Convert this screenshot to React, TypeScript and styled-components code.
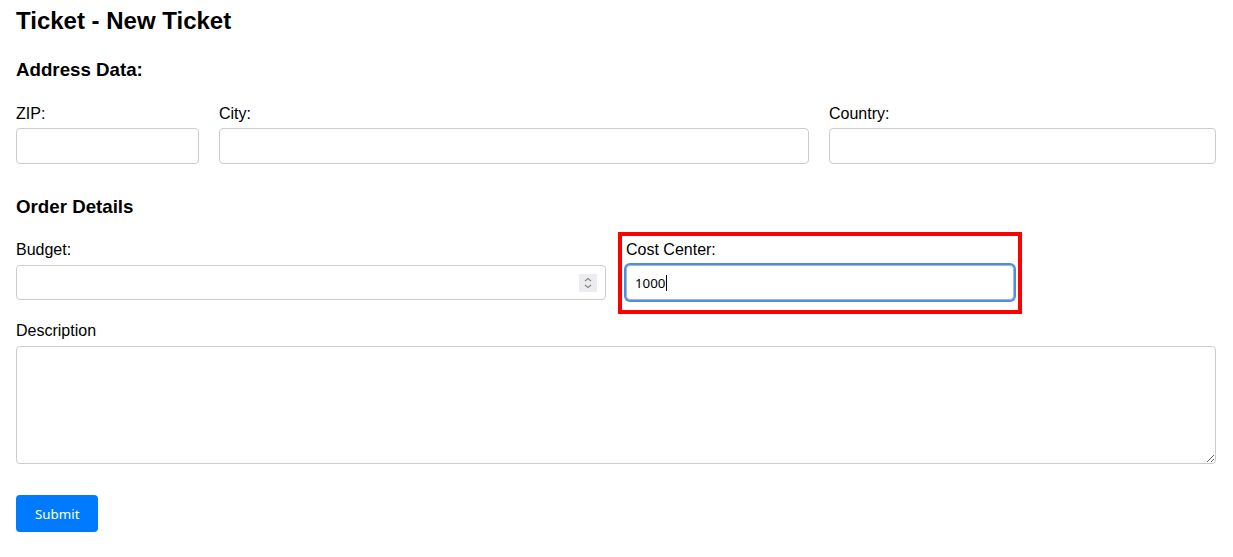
import React, { useEffect, useRef } from "react";
import styled, { createGlobalStyle } from "styled-components";

const Global = createGlobalStyle`
  html, body { margin: 0; padding: 0; background: #fff; }
  body { font-family: "Liberation Sans", Arial, sans-serif; color: #000; }
  * { box-sizing: border-box; }
`;

const Page = styled.div`
  padding: 0 16px 20px 16px;
  width: 1232px;
`;

const Title = styled.h1`
  margin: 7px 0 0 0;
  font-size: 24px;
  line-height: 28px;
  font-weight: 700;
`;

const SectionTitle = styled.h3<{ $top: number; $bottom: number }>`
  margin: ${(p) => p.$top}px 0 ${(p) => p.$bottom}px 0;
  font-size: 18.72px;
  line-height: 21px;
  font-weight: 700;
`;

const Row = styled.div<{ $cols: string }>`
  display: grid;
  grid-template-columns: ${(p) => p.$cols};
  column-gap: 20px;
  align-items: start;
`;

const Group = styled.div<{ $highlight?: boolean; $mb?: number }>`
  position: relative;
  display: flex;
  flex-direction: column;
  margin-bottom: ${(p) => p.$mb ?? 0}px;
  ${(p) =>
    p.$highlight
      ? `
    &::before {
      content: "";
      position: absolute;
      top: -9px;
      left: -8px;
      right: -8px;
      bottom: -14px;
      border: 4px solid #ff0000;
      pointer-events: none;
    }
  `
      : ""}
`;

const Label = styled.label<{ $mb?: number }>`
  display: block;
  font-size: 16px;
  line-height: 18px;
  margin-bottom: ${(p) => p.$mb ?? 5}px;
`;

const TextInput = styled.input<{ $h?: number }>`
  width: 100%;
  height: ${(p) => p.$h ?? 36}px;
  border: 1px solid #ccc;
  border-radius: 4px;
  padding: 0 8px;
  font-family: "Noto Sans", sans-serif;
  font-size: 13.33px;
  color: #000;
  background: #fff;
  &:focus {
    outline: none;
    border-color: #a9b8c8;
    box-shadow: 0 0 0 2px #4a8ee6;
  }
`;

const FieldWrap = styled.div`
  position: relative;
`;

const Caret = styled.span`
  position: absolute;
  left: 40px;
  top: 10px;
  width: 1px;
  height: 16px;
  background: #000;
  pointer-events: none;
`;

const NumberBox = styled.div`
  display: flex;
  align-items: center;
  height: 35px;
  border: 1px solid #ccc;
  border-radius: 4px;
  padding: 0 8px 0 8px;
  background: #fff;
`;

const BareInput = styled.input`
  flex: 1;
  min-width: 0;
  border: none;
  outline: none;
  height: 100%;
  padding: 0;
  font-family: "Noto Sans", sans-serif;
  font-size: 13.33px;
  background: transparent;
`;

const Spinner = styled.div`
  width: 18px;
  height: 18px;
  background: #ececf0;
  display: flex;
  align-items: center;
  justify-content: center;
`;

const TextArea = styled.textarea`
  display: block;
  width: 100%;
  height: 118px;
  border: 1px solid #ccc;
  border-radius: 4px;
  padding: 8px;
  font-family: "Noto Sans", sans-serif;
  font-size: 13.33px;
  margin-bottom: 31px;
`;

const SubmitButton = styled.button`
  height: 37px;
  padding: 0 19px;
  border: none;
  border-radius: 4px;
  background: #007bff;
  color: #fff;
  font-family: "Noto Sans", sans-serif;
  font-size: 13.33px;
  cursor: pointer;
`;

export default function App() {
  const ref = useRef<HTMLInputElement>(null);
  useEffect(() => {
    const el = ref.current;
    if (el) {
      el.focus();
      el.setSelectionRange(4, 4);
    }
  }, []);

  return (
    <Page>
      <Global />
      <Title>Ticket - New Ticket</Title>

      <SectionTitle $top={24} $bottom={25}>Address Data:</SectionTitle>
      <Row $cols="183px 590px 387px">
        <Group>
          <Label>ZIP:</Label>
          <TextInput type="text" />
        </Group>
        <Group>
          <Label>City:</Label>
          <TextInput type="text" />
        </Group>
        <Group>
          <Label>Country:</Label>
          <TextInput type="text" />
        </Group>
      </Row>

      <SectionTitle $top={32} $bottom={24}>Order Details</SectionTitle>
      <Row $cols="590px 388px">
        <Group $mb={22}>
          <Label $mb={6}>Budget:</Label>
          <NumberBox>
            <BareInput type="text" />
            <Spinner>
              <svg width="10" height="14" viewBox="0 0 10 14" fill="none" stroke="#777" strokeWidth="1.1">
                <path d="M2 5.2 L5 2.4 L8 5.2" />
                <path d="M2 8.8 L5 11.6 L8 8.8" />
              </svg>
            </Spinner>
          </NumberBox>
        </Group>
        <Group $highlight $mb={22}>
          <Label $mb={6}>Cost Center:</Label>
          <FieldWrap>
            <TextInput ref={ref} type="text" defaultValue="1000" $h={35} />
            <Caret />
          </FieldWrap>
        </Group>
      </Row>

      <Group>
        <Label $mb={6}>Description</Label>
        <TextArea />
      </Group>

      <SubmitButton type="button">Submit</SubmitButton>
    </Page>
  );
}
